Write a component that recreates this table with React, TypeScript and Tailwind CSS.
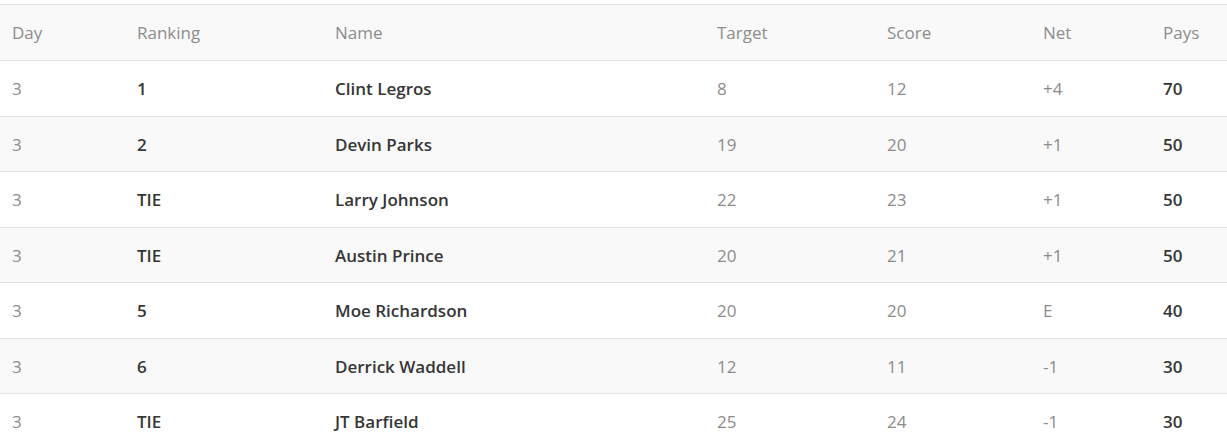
const rows = [
  { day: "3", rank: "1", name: "Clint Legros", target: "8", score: "12", net: "+4", pays: "70" },
  { day: "3", rank: "2", name: "Devin Parks", target: "19", score: "20", net: "+1", pays: "50" },
  { day: "3", rank: "TIE", name: "Larry Johnson", target: "22", score: "23", net: "+1", pays: "50" },
  { day: "3", rank: "TIE", name: "Austin Prince", target: "20", score: "21", net: "+1", pays: "50" },
  { day: "3", rank: "5", name: "Moe Richardson", target: "20", score: "20", net: "E", pays: "40" },
  { day: "3", rank: "6", name: "Derrick Waddell", target: "12", score: "11", net: "-1", pays: "30" },
  { day: "3", rank: "TIE", name: "JT Barfield", target: "25", score: "24", net: "-1", pays: "30" },
];

const cols = "grid grid-cols-[125px_198px_382px_170px_156px_120px_1fr] items-center";

export default function App() {
  return (
    <div
      className="w-[1227px] h-[447px] overflow-hidden bg-white pt-[4px] text-[17px] leading-[24px]"
      style={{ fontFamily: '"Open Sans", "Liberation Sans", sans-serif' }}
    >
      <div className={`${cols} h-[57px] border-y border-[#e2e2e2] bg-[#f9f9f9] text-[#8c8c8c]`}>
        {["Day", "Ranking", "Name", "Target", "Score", "Net", "Pays"].map((h) => (
          <div key={h} className="pl-[12px]">
            {h}
          </div>
        ))}
      </div>
      {rows.map((r, i) => (
        <div
          key={i}
          className={`${cols} h-[55.5px] pt-[2px] border-b border-[#e2e2e2] text-[#8c8c8c] ${
            i % 2 === 1 ? "bg-[#f9f9f9]" : "bg-white"
          }`}
        >
          <div className="pl-[12px]">{r.day}</div>
          <div className="pl-[12px] font-semibold text-[#363636]">{r.rank}</div>
          <div className="pl-[12px] font-semibold text-[#363636]">{r.name}</div>
          <div className="pl-[12px]">{r.target}</div>
          <div className="pl-[12px]">{r.score}</div>
          <div className="pl-[12px]">{r.net}</div>
          <div className="pl-[12px] font-semibold text-[#363636]">{r.pays}</div>
        </div>
      ))}
    </div>
  );
}
